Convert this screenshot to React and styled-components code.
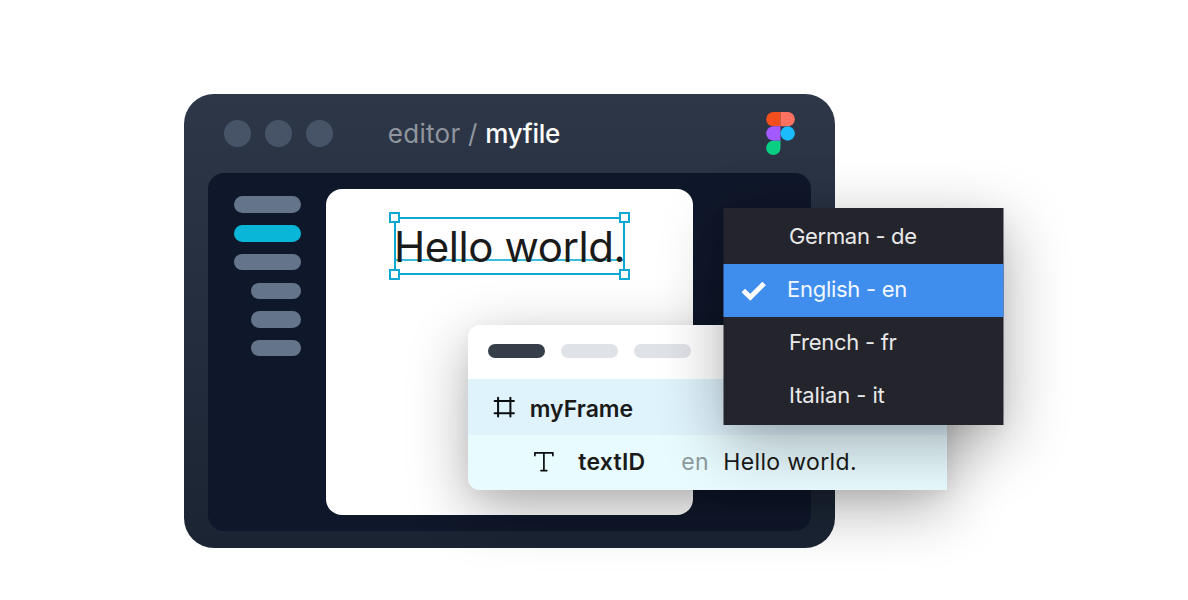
import React from "react";
import styled, { createGlobalStyle } from "styled-components";

const GlobalStyle = createGlobalStyle`
  * { box-sizing: border-box; }
  body {
    margin: 0;
    background: #fff;
    font-family: Inter, "Liberation Sans", sans-serif;
  }
`;

const Stage = styled.main`
  position: relative;
  width: 1188px;
  height: 600px;
  padding: 94px 0 0 184px;
  overflow: hidden;
  background: #fff;
`;

const Window = styled.section`
  display: flex;
  flex-direction: column;
  width: 651.3px;
  height: 454.3px;
  padding: 0 24.3px 17.3px;
  border-radius: 30px;
  background: linear-gradient(#2d3748, #1a2433);
`;

const TitleBar = styled.header`
  display: flex;
  align-items: center;
  height: 78.7px;
  flex: none;
  padding: 0 16px;
`;

const Dots = styled.div`
  display: flex;
  gap: 14.4px;
`;

const Dot = styled.span`
  width: 26.6px;
  height: 26.6px;
  border-radius: 50%;
  background: #475467;
`;

const Breadcrumb = styled.div`
  margin-left: 55px;
  padding-top: 1.5px;
  font-size: 26px;
  line-height: 32px;
  letter-spacing: 0.27px;
  white-space: pre;
  color: #90959e;
`;

const FileName = styled.span`
  color: #fff;
  font-weight: 500;
  letter-spacing: -0.25px;
`;

const FigmaLogo = styled.svg`
  width: 29px;
  height: 43px;
  margin-left: auto;
`;

const Workspace = styled.div`
  display: flex;
  flex: 1;
  gap: 25.5px;
  padding: 16.3px 118px 16.3px 25.7px;
  border-radius: 16px;
  background: #0f172a;
`;

const Layers = styled.nav`
  display: flex;
  flex-direction: column;
  align-items: flex-end;
  gap: 12.2px;
  width: 67px;
  padding-top: 7.5px;
`;

const Layer = styled.span`
  width: ${(p) => (p.$nested ? "50.3px" : "67px")};
  height: 16.5px;
  border-radius: 9px;
  background: ${(p) => (p.$active ? "#09b6d8" : "#64748b")};
`;

const Canvas = styled.div`
  flex: 1;
  padding: 28px 0 0 67.5px;
  border-radius: 16px;
  background: #fff;
`;

const Selection = styled.div`
  position: relative;
  width: 231px;
  height: 58px;
  border: 2px solid #0aa8d2;
`;

const Baseline = styled.i`
  position: absolute;
  left: 0;
  right: 0;
  top: 40px;
  height: 2px;
  background: #3dbbdc;
`;

const Handle = styled.i`
  position: absolute;
  width: 11.6px;
  height: 11.6px;
  border: 2px solid #0aa8d2;
  background: #fff;
  ${(p) => p.$x}: -7.3px;
  ${(p) => p.$y}: -7.3px;
`;

const SelectedText = styled.div`
  position: relative;
  padding-top: 1px;
  font-size: 42px;
  line-height: 54px;
  font-weight: 430;
  letter-spacing: -0.42px;
  margin-left: -2px;
  color: #1a1a1a;
  white-space: nowrap;
`;

const Panel = styled.section`
  position: absolute;
  left: 468.3px;
  top: 325px;
  width: 479px;
  height: 165px;
  border-radius: 12px 0 0 12px;
  background: #fff;
  box-shadow: 0 18px 60px rgba(0, 0, 0, 0.32), 0 5px 18px rgba(0, 0, 0, 0.04);
`;

const Tabs = styled.div`
  display: flex;
  gap: 16.3px;
  height: 54.2px;
  padding: 18.9px 0 0 19.7px;
`;

const Tab = styled.span`
  width: 56.7px;
  height: 14px;
  border-radius: 7px;
  background: ${(p) => (p.$active ? "#363e49" : "#dfe2e7")};
`;

const Row = styled.div`
  display: flex;
  align-items: center;
  height: 55.4px;
  padding-left: ${(p) => (p.$child ? "64.5px" : "24.5px")};
  border-radius: ${(p) => (p.$child ? "0 0 0 12px" : "0")};
  background: ${(p) => (p.$child ? "#e8fbff" : "#dff3fd")};
  font-size: 23px;
  line-height: 30px;
  color: #1a1a1a;
  white-space: nowrap;
`;

const RowIcon = styled.svg`
  width: 22px;
  height: 22px;
  flex: none;
`;

const Name = styled.span`
  width: ${(p) => p.$width};
  margin-left: ${(p) => p.$gap};
  padding-top: ${(p) => p.$drop};
  font-weight: 600;
  letter-spacing: ${(p) => p.$track || "0"};
`;

const Lang = styled.span`
  width: 42px;
  letter-spacing: 0.3px;
  color: #8f9b9f;
`;

const Value = styled.span`
  letter-spacing: 0.35px;
`;

const Menu = styled.ul`
  position: absolute;
  left: 723px;
  top: 208px;
  width: 280px;
  height: 217px;
  margin: 0;
  padding: 2.5px 0;
  list-style: none;
  transform: translateX(0.5px);
  background: #24242c;
  box-shadow: 0 18px 60px rgba(0, 0, 0, 0.32), 0 5px 18px rgba(0, 0, 0, 0.04);
`;

const Option = styled.li`
  display: flex;
  align-items: center;
  height: 53px;
  padding: 0 0 2px ${(p) => (p.$selected ? "18px" : "65.5px")};
  background: ${(p) => (p.$selected ? "#3f8eee" : "transparent")};
  color: ${(p) => (p.$selected ? "#f2f7fe" : "#e9e9ea")};
  font-size: 22px;
  line-height: 28px;
  letter-spacing: ${(p) => p.$track};
`;

const Check = styled.svg`
  width: 25px;
  height: 21px;
  margin-right: 20.5px;
  margin-top: 2px;
`;

const options = [
  { label: "German - de", track: "-0.32px" },
  { label: "English - en", track: "-0.27px", selected: true },
  { label: "French - fr", track: "-0.27px" },
  { label: "Italian - it", track: "-0.1px" },
];
const layers = [
  {}, { active: true }, {}, { nested: true }, { nested: true }, { nested: true },
];

export default function App() {
  return (
    <>
      <GlobalStyle />
      <Stage>
        <Window>
          <TitleBar>
            <Dots><Dot /><Dot /><Dot /></Dots>
            <Breadcrumb>editor / <FileName>myfile</FileName></Breadcrumb>
            <FigmaLogo viewBox="0 0 28.6 42.9">
              <path d="M7.15 0H14.3V14.3H7.15A7.15 7.15 0 0 1 7.15 0Z" fill="#f24e1e" />
              <path d="M14.3 0H21.45A7.15 7.15 0 0 1 21.45 14.3H14.3Z" fill="#ff7262" />
              <path d="M7.15 14.3H14.3V28.6H7.15A7.15 7.15 0 0 1 7.15 14.3Z" fill="#a259ff" />
              <circle cx="21.45" cy="21.45" r="7.15" fill="#1abcfe" />
              <path d="M7.15 28.6H14.3V35.75A7.15 7.15 0 1 1 7.15 28.6Z" fill="#0acf83" />
            </FigmaLogo>
          </TitleBar>
          <Workspace>
            <Layers>
              {layers.map((l, i) => <Layer key={i} $active={l.active} $nested={l.nested} />)}
            </Layers>
            <Canvas>
              <Selection>
                <Baseline />
                <SelectedText>Hello world.</SelectedText>
                <Handle $x="left" $y="top" />
                <Handle $x="right" $y="top" />
                <Handle $x="left" $y="bottom" />
                <Handle $x="right" $y="bottom" />
              </Selection>
            </Canvas>
          </Workspace>
        </Window>
        <Panel>
          <Tabs><Tab $active /><Tab /><Tab /></Tabs>
          <Row>
            <RowIcon viewBox="0 0 22 22" fill="none" stroke="#0a0d0f" strokeWidth="2" strokeLinecap="round">
              <path d="M5.1 1.8V20.4M17.4 1.8V20.4M1.6 4.9H20.9M1.6 17.3H20.9" />
            </RowIcon>
            <Name $gap="15px" $drop="3.5px">myFrame</Name>
          </Row>
          <Row $child>
            <RowIcon viewBox="0 0 22 22" fill="none" stroke="#0a0d0f" strokeWidth="1.7" strokeLinecap="round" strokeLinejoin="round">
              <path d="M1.9 4.6V1.8H19.9V4.6M10.9 1.8V19.6M8 19.6H13.8" />
            </RowIcon>
            <Name $gap="23.5px" $width="103px" $drop="0" $track="0.25px">textID</Name>
            <Lang>en</Lang>
            <Value>Hello world.</Value>
          </Row>
        </Panel>
        <Menu>
          {options.map((o) => (
            <Option key={o.label} $selected={o.selected} $track={o.track}>
              {o.selected && (
                <Check viewBox="0 0 25 21">
                  <path d="M1.8 10.5L8.8 17.3L22.6 3.5" fill="none" stroke="#fff" strokeWidth="4.9" />
                </Check>
              )}
              {o.label}
            </Option>
          ))}
        </Menu>
      </Stage>
    </>
  );
}
